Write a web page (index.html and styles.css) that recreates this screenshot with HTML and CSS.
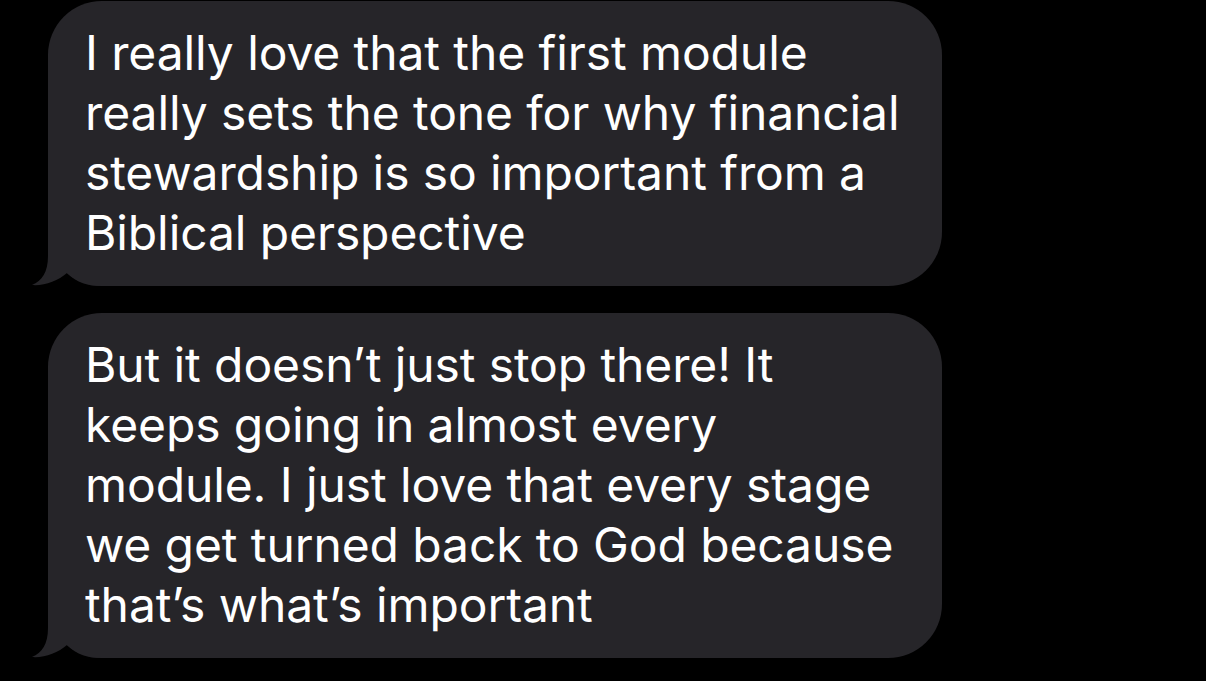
FILE: index.html
```html
<!DOCTYPE html>
<html lang="en">
<head>
    <meta charset="UTF-8">
    <meta name="viewport" content="width=device-width, initial-scale=1.0">
    <title>Messages</title>
    <link rel="stylesheet" href="styles.css">
</head>
<body>
    <div class="thread">
        <div class="bubble">
            <p class="text">I really love that the first module<br>really sets the tone for why financial<br>stewardship is so important from a<br>Biblical perspective</p>
            <!-- tail -->
            <svg class="tail" width="80" height="60" viewBox="0 0 80 60">
                <path d="M16 0 L16 30 C16 46 10 55 0 59 C12 60 26 55 35 47 C45 57 56 60 70 60 L80 60 L80 0 Z" fill="#262529"/>
            </svg>
        </div>
        <div class="bubble">
            <p class="text">But it doesn’t just stop there! It<br>keeps going in almost every<br>module. I just love that every stage<br>we get turned back to God because<br>that’s what’s important</p>
            <svg class="tail" width="80" height="60" viewBox="0 0 80 60">
                <path d="M16 0 L16 30 C16 46 10 55 0 59 C12 60 26 55 35 47 C45 57 56 60 70 60 L80 60 L80 0 Z" fill="#262529"/>
            </svg>
        </div>
    </div>
</body>
</html>
```

FILE: styles.css
```css
html, body {
    margin: 0;
    background: #000;
}
body {
    font-family: Inter, "Noto Sans", sans-serif;
    width: 1206px;
    height: 681px;
    overflow: hidden;
}
.thread {
    display: flex;
    flex-direction: column;
    gap: 27px;
    padding: 1px 0 0 48px;
}
.bubble {
    position: relative;
    width: 894px;
    box-sizing: border-box;
    background: #262529;
    border-radius: 54px;
    padding: 22px 30px 23px 37px;
}
.text {
    position: relative;
    z-index: 1;
    margin: 0;
    color: #fff;
    font-size: 48px;
    line-height: 60px;
    letter-spacing: -0.1px;
    white-space: nowrap;
}
.tail {
    position: absolute;
    left: -16px;
    bottom: 0;
    display: block;
}
```
